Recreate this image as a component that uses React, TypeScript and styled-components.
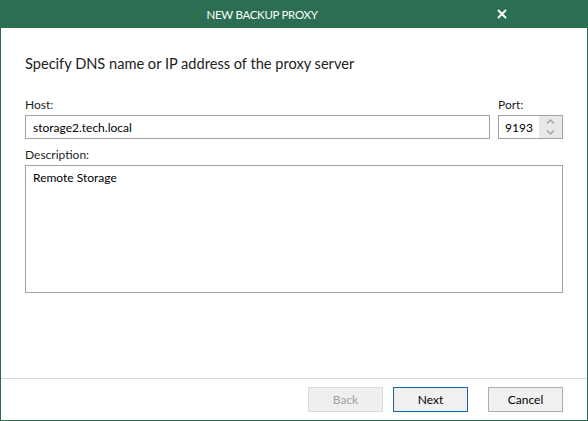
import React from "react";
import styled, { createGlobalStyle } from "styled-components";

const Global = createGlobalStyle`
  html, body { margin: 0; padding: 0; background: #fff; }
  body { font-family: Lato, "Noto Sans", sans-serif; }
  * { box-sizing: border-box; }
`;

const Dialog = styled.div`
  width: 588px;
  height: 421px;
  display: flex;
  flex-direction: column;
  border: 1px solid #2b6e51;
  border-top: none;
  background: #fff;
`;

const TitleBar = styled.div`
  height: 28px;
  margin: 0 -1px;
  padding-right: 64px;
  background: #2b6e51;
  color: #fff;
  display: flex;
  align-items: center;
  justify-content: center;
  position: relative;
  font-size: 11.5px;
  letter-spacing: -0.3px;
`;

const CloseButton = styled.div`
  position: absolute;
  top: 9px;
  right: 81px;
  width: 10px;
  height: 10px;
  display: flex;
`;

const Body = styled.div`
  flex: 1;
  padding: 26px 24px 0 24px;
  display: flex;
  flex-direction: column;
`;

const Heading = styled.div`
  font-size: 14.6px;
  line-height: 20px;
  color: #222;
  margin-bottom: 23px;
`;

const Row = styled.div`
  display: flex;
  gap: 8px;
`;

const Field = styled.div<{ $w?: number }>`
  display: flex;
  flex-direction: column;
  ${(p) => (p.$w ? `width: ${p.$w}px;` : "flex: 1;")}
`;

const Label = styled.div`
  font-size: 12px;
  line-height: 16px;
  color: #1e1e1e;
  margin-bottom: 2px;
`;

const TextBox = styled.div`
  height: 24px;
  border: 1px solid #a3a3a3;
  font-size: 12px;
  display: flex;
  align-items: center;
  padding-left: 7px;
  color: #000;
`;

const Spin = styled.div`
  height: 24px;
  border: 1px solid #a3a3a3;
  display: flex;
  font-size: 12px;
`;

const SpinValue = styled.div`
  flex: 1;
  display: flex;
  align-items: center;
  padding-left: 6px;
`;

const SpinButtons = styled.div`
  width: 23px;
  background: #e8e8e8;
  display: flex;
  flex-direction: column;
`;

const SpinHalf = styled.div`
  flex: 1;
  display: flex;
  align-items: center;
  justify-content: center;
`;

const DescLabel = styled(Label)`
  margin-top: 8px;
`;

const TextArea = styled.div`
  height: 128px;
  border: 1px solid #a3a3a3;
  font-size: 12px;
  padding: 4px 7px;
  line-height: 16px;
`;

const Footer = styled.div`
  height: 42px;
  border-top: 1px solid #d6d6d6;
  display: flex;
  justify-content: flex-end;
  align-items: flex-start;
  padding: 8px 24px 0 0;
`;

const Button = styled.div<{ $variant?: "disabled" | "default" | "normal" }>`
  width: 75px;
  height: 25px;
  display: flex;
  align-items: center;
  justify-content: center;
  font-size: 12px;
  background: ${(p) => (p.$variant === "disabled" ? "#efefef" : "#f0f0f0")};
  color: ${(p) => (p.$variant === "disabled" ? "#a0a0a0" : "#000")};
  border: 1px solid
    ${(p) =>
      p.$variant === "disabled" ? "#d9d9d9" : p.$variant === "default" ? "#1565a8" : "#adadad"};
`;

const ButtonGroup = styled.div<{ $gap: number }>`
  display: flex;
  gap: ${(p) => p.$gap}px;
`;

export default function App() {
  return (
    <>
      <Global />
      <Dialog>
        <TitleBar>
          NEW BACKUP PROXY
          <CloseButton>
            <svg width="10" height="10" viewBox="0 0 10 10">
              <path d="M1 1L9 9M9 1L1 9" stroke="#fff" strokeWidth="2" />
            </svg>
          </CloseButton>
        </TitleBar>
        <Body>
          <Heading>Specify DNS name or IP address of the proxy server</Heading>
          <Row>
            <Field>
              <Label>Host:</Label>
              <TextBox>storage2.tech.local</TextBox>
            </Field>
            <Field $w={65}>
              <Label>Port:</Label>
              <Spin>
                <SpinValue>9193</SpinValue>
                <SpinButtons>
                  <SpinHalf>
                    <svg width="9" height="5" viewBox="0 0 9 5">
                      <path d="M1 4.5L4.5 1L8 4.5" stroke="#a8a8a8" strokeWidth="1.5" fill="none" />
                    </svg>
                  </SpinHalf>
                  <SpinHalf>
                    <svg width="9" height="5" viewBox="0 0 9 5">
                      <path d="M1 0.5L4.5 4L8 0.5" stroke="#a8a8a8" strokeWidth="1.5" fill="none" />
                    </svg>
                  </SpinHalf>
                </SpinButtons>
              </Spin>
            </Field>
          </Row>
          <DescLabel>Description:</DescLabel>
          <TextArea>Remote Storage</TextArea>
        </Body>
        <Footer>
          <ButtonGroup $gap={20}>
            <ButtonGroup $gap={10}>
              <Button $variant="disabled">Back</Button>
              <Button $variant="default">Next</Button>
            </ButtonGroup>
            <Button $variant="normal">Cancel</Button>
          </ButtonGroup>
        </Footer>
      </Dialog>
    </>
  );
}
